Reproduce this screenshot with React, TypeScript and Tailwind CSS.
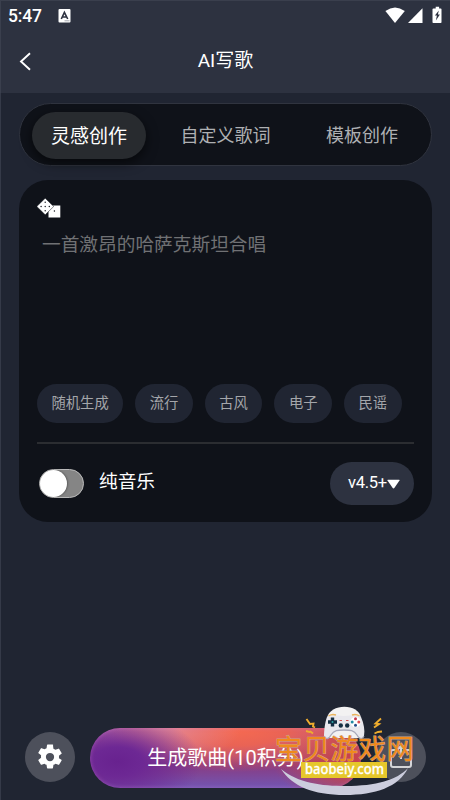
import { useState } from 'react'
import clsx from 'clsx'

const tabs = [
  { label: '灵感创作', width: 'w-[114px]' },
  { label: '自定义歌词', width: 'w-[159px]' },
  { label: '模板创作', width: 'w-[114px]' },
]

const styles = ['随机生成', '流行', '古风', '电子', '民谣']

function StatusBar() {
  return (
    <div className="flex h-[31px] items-center justify-between pl-[7px] pr-[8px]">
      <div className="flex items-center gap-[16px]">
        <span className="text-[17.500px] font-medium leading-[31px] tracking-[-0.2px]">5:47</span>
        <svg width="13" height="14" viewBox="0 0 12 14" className="relative top-[-1px]">
          <rect width="12" height="13.4" rx="1" fill="#fff" />
          <path d="M2.8 10 5.9 3.3 9.2 10M4 8h4" fill="none" stroke="#2d3240" strokeWidth="1.6" />
          <path d="M6 11.8h5" stroke="#8c909a" strokeWidth="0.8" />
        </svg>
      </div>
      <svg width="57" height="18" viewBox="0 0 57 18" fill="#fff" className="relative top-[-1.500px]">
        <path d="M.4 5.1Q10 -1.9 19.8 5.1L10 17Z" />
        <path d="M37.5 2.2V17H23Z" />
        <path d="M48.5 2.5h2.2V.8h3.4v1.7h1.6q.8 0 .8.8v12.9q0 .8-.8.8h-7.4q-.8 0-.8-.8V3.3q0-.8 1-.8Z" />
        <path d="m53.8 4.6-3.9 5h2l-1 5 4-6.1h-2Z" fill="#2d3240" />
      </svg>
    </div>
  )
}

function DiceIcon() {
  return (
    <svg width="24" height="20" viewBox="0 0 24 20" className="block shrink-0">
      <rect x="11.5" y="7.500" width="11.8" height="12" fill="#fff" />
      <path d="M8.200.2 16.700 8.500 8.200 16.800-.2 8.500Z" fill="#fff" stroke="#0f1219" strokeWidth="0.5" />
      <g fill="#0f1219">
        <circle cx="8.2" cy="4.300" r="0.7" />
        <circle cx="4.1" cy="8.500" r="0.7" />
        <circle cx="8.2" cy="8.500" r="0.7" />
        <circle cx="12.3" cy="8.500" r="0.7" />
        <circle cx="8.2" cy="12.700" r="0.7" />
        <circle cx="17.4" cy="13" r="0.7" />
      </g>
    </svg>
  )
}

function GearIcon() {
  return (
    <svg width="30" height="30" viewBox="0 0 24 24" fill="#fff">
      <path d="M19.14 12.94c.04-.3.06-.61.06-.94s-.02-.64-.07-.94l2.03-1.58a.49.49 0 0 0 .12-.61l-1.92-3.32a.49.49 0 0 0-.59-.22l-2.39.96a7 7 0 0 0-1.62-.94l-.36-2.54A.48.48 0 0 0 13.92 2h-3.84a.47.47 0 0 0-.47.41l-.36 2.54c-.59.24-1.13.57-1.62.94l-2.39-.96a.48.48 0 0 0-.59.22L2.74 8.47a.47.47 0 0 0 .12.61l2.03 1.58c-.05.3-.09.63-.09.94s.02.64.07.94l-2.03 1.58a.49.49 0 0 0-.12.61l1.92 3.32c.12.22.37.29.59.22l2.39-.96c.5.38 1.03.7 1.62.94l.36 2.54c.05.24.24.41.48.41h3.84c.24 0 .44-.17.47-.41l.36-2.54a7 7 0 0 0 1.62-.94l2.39.96c.22.08.47 0 .59-.22l1.92-3.32a.47.47 0 0 0-.12-.61ZM12 15.3a3.3 3.3 0 1 1 0-6.6 3.3 3.3 0 0 1 0 6.6Z" />
    </svg>
  )
}

function SiteLogo() {
  return (
    <svg
      width="150"
      height="100"
      viewBox="0 0 150 100"
      className="pointer-events-none absolute left-[270px] top-[700px]"
    >
      {/* smile */}
      <path d="M11 69C28 83 51 86 76 86C106 86 127 80 138 68C129 87 105 95 75 95C43 95 22 86 11 69Z" fill="#cccddd" />

      {/* gamepad */}
      <path d="M57 18C60 3 89 3 91 18L89 38H59Z" fill="#f3f2f2" />
      <path
        d="M57 17C62 14 66 16 74 16C82 16 86 14 91 17C94 24 95 30 94 36C92 40 89 39 87 35C84 30 80 30 74 30C68 30 64 30 61 35C59 39 56 40 54 36C54 30 55 22 57 17Z"
        fill="#e9e8ed"
      />
      <path d="M94 36C92 40 89 39 87 35C84 30 80 30 74 30C68 30 64 30 61 35C59 39 56 40 54 36" fill="none" stroke="#a9aabb" strokeWidth="1.3" />
      <path d="M58.500 16Q62 13.500 66 15M82 15Q86 13.500 89.500 16" fill="none" stroke="#eab45c" strokeWidth="1.4" />
      <path d="M62.500 17.500v9M58 22h9" stroke="#142f43" strokeWidth="3.4" />
      <circle cx="62.5" cy="22" r="1" fill="#2fa5a5" />
      <circle cx="85.500" cy="22" r="5.200" fill="#fff" />
      <circle cx="85.500" cy="18.700" r="1.500" fill="#c6394e" />
      <circle cx="82.200" cy="22" r="1.500" fill="#238ca4" />
      <circle cx="88.800" cy="22" r="1.500" fill="#e04d51" />
      <circle cx="85.500" cy="25.300" r="1.500" fill="#254e88" />
      <g fill="#142f43">
        <circle cx="70.8" cy="25.5" r="2.2" />
        <circle cx="77.2" cy="25.5" r="2.2" />
      </g>
      <path d="M69.500 20.500h2.500M76 20.500h2.500" stroke="#d05454" strokeWidth="1.2" />

      {/* sparks */}
      <g fill="none" stroke="#efad2e" strokeWidth="1.9">
        <path d="m36.500 19 3.500 5 3.500-.5-.5 3 2 1M36 31l3.500 1 1-.5 2.500 2" />
        <path d="m111 18.500-5.500 5 3.500.500-5 3.500M112 31.500l-4 .5-3.500 1.500" />
      </g>

      <text
        x="4.800"
        y="58.500"
        fontFamily="'Noto Sans CJK SC', sans-serif"
        fontSize="27.500"
        fontWeight="400"
        letterSpacing="0.4"
        fill="#f08a1c"
        stroke="#c9a48c"
        strokeWidth="0.9"
        paintOrder="stroke"
      >
        宝贝游戏网
      </text>
      <rect x="31" y="62" width="86" height="16" fill="#e6c72b" />
      <text
        x="35"
        y="74.200"
        textLength="79"
        lengthAdjust="spacingAndGlyphs"
        fontFamily="'Noto Sans', sans-serif"
        fontSize="14.500"
        fontWeight="500"
        fill="#fff"
        stroke="#fff"
        strokeWidth="0.3"
      >
        baobeiy.com
      </text>
    </svg>
  )
}

export default function App() {
  const [activeTab, setActiveTab] = useState(0)
  const [instrumental, setInstrumental] = useState(false)
  const [prompt, setPrompt] = useState('')

  return (
    <div className="relative flex h-[800px] w-[450px] flex-col overflow-hidden bg-[#202532] font-[Roboto,'Noto_Sans_CJK_SC',sans-serif] text-white shadow-[inset_1px_1px_0_#353a48]">
      <header className="h-[93px] shrink-0 border-l border-t border-[#3a3f4d] bg-[#2d3240]">
        <StatusBar />
        <div className="grid h-[58px] grid-cols-[50px_1fr_50px] items-center">
          <button className="pl-[18px]" aria-label="返回">
            <svg width="13" height="19" viewBox="0 0 13 19" fill="none" stroke="#fff" strokeWidth="1.9">
              <path d="M11 1.200 2 9.500 11 17.800" />
            </svg>
          </button>
          <h1 className="text-center text-[19px] leading-[28px]">AI写歌</h1>
        </div>
      </header>

      <main className="flex flex-1 flex-col px-[19px] pt-[10px]">
        <nav className="mr-[-1px] flex h-[63px] items-center rounded-full border border-[#30343f] bg-[#0f1219] px-[12px]">
          {tabs.map((tab, i) => (
            <button
              key={tab.label}
              onClick={() => setActiveTab(i)}
              className={clsx(
                'h-[47px] shrink-0 whitespace-nowrap rounded-full',
                tab.width,
                i === activeTab
                  ? 'mt-[2px] bg-[#282b2f] pt-[4px] text-[19px] text-white shadow-[0_4px_12px_rgba(0,0,0,0.6)]'
                  : 'pt-[2px] text-[18px] text-[#aeb0b3]'
              )}
            >
              {tab.label}
            </button>
          ))}
        </nav>

        <section className="mr-[-1px] mt-[14px] flex h-[342px] flex-col rounded-[29px] bg-[#0f1219] px-[18px] pt-[18px]">
          <DiceIcon />
          <textarea
            value={prompt}
            onChange={(e) => setPrompt(e.target.value)}
            placeholder="一首激昂的哈萨克斯坦合唱"
            className="mt-[13px] h-[153px] shrink-0 resize-none bg-transparent px-[5px] text-[18.700px] leading-[28px] outline-none placeholder:text-[#707174]"
          />

          <div className="flex h-[39px] shrink-0 gap-[12px] overflow-hidden">
            {styles.map((style) => (
              <button
                key={style}
                className="shrink-0 rounded-full bg-[#202532] px-[14.500px] text-[14.300px] text-[#a4a6aa]"
              >
                {style}
              </button>
            ))}
            <span className="w-[58px] shrink-0 rounded-full bg-[#202532]" />
          </div>

          <div className="mt-[19px] flex h-[80px] shrink-0 items-center border-t-2 border-[#2b2d31]">
            <button
              role="switch"
              aria-checked={instrumental}
              aria-label="纯音乐"
              onClick={() => setInstrumental(!instrumental)}
              className={clsx(
                'ml-[2px] flex h-[29px] w-[45px] rounded-full border border-[#bababa] bg-[#858585]',
                instrumental && 'justify-end'
              )}
            >
              <span className="size-[27px] rounded-full bg-white shadow-[1px_0_2px_rgba(0,0,0,0.3)]" />
            </button>
            <span className="ml-[15px] pb-[2px] text-[18.700px]">纯音乐</span>
            <button className="ml-auto flex h-[43px] w-[84px] items-center justify-center rounded-full bg-[#2d3240] pl-[4px] pt-px text-[16.500px] tracking-[-0.3px]">
              v4.5+
              <svg width="13" height="10" viewBox="0 0 13 10" fill="#fff">
                <path d="M1 .7H12Q13 .7 12.500 1.600L7.500 8.800Q6.500 10 5.500 8.800L.5 1.600Q0 .7 1 .7Z" />
              </svg>
            </button>
          </div>
        </section>
      </main>

      <footer className="flex h-[72px] shrink-0 items-start gap-[15px] px-[25px]">
        <button
          className="mt-[4px] flex size-[50px] shrink-0 items-center justify-center rounded-full bg-[#4d505b]"
          aria-label="设置"
        >
          <GearIcon />
        </button>
        <button className="flex h-[60px] w-[271px] shrink-0 items-center justify-center rounded-full bg-[radial-gradient(ellipse_85px_48px_at_10%_56%,#68228f_0%,#6d2894_30%,transparent_100%),radial-gradient(ellipse_80px_36px_at_26%_0%,#e68b98_0%,transparent_100%),radial-gradient(ellipse_130px_44px_at_54%_0%,#f76b50_0%,#e96355_40%,transparent_100%),radial-gradient(ellipse_85px_52px_at_98%_45%,#c9424b_0%,#bd4656_40%,transparent_100%),linear-gradient(180deg,#b268b5_0%,#8a3a80_60%,#7156b3_100%)] text-[20px] shadow-[inset_0_0_4px_rgba(215,130,210,0.4)]">
          生成歌曲(10积分)
        </button>
        <button
          className="mt-[4px] flex size-[50px] shrink-0 items-center justify-center rounded-full bg-[#4d505b]"
          aria-label="分享"
        >
          <svg width="24" height="26" viewBox="0 0 24 26" fill="none" stroke="#d3d4d7" strokeWidth="2">
            <path d="M8 6H4Q2 6 2 8V21Q2 23 4 23H20Q22 23 22 21V8Q22 6 20 6H16M12 15V2M8 6 12 2 16 6" />
          </svg>
        </button>
      </footer>

      <SiteLogo />
    </div>
  )
}
